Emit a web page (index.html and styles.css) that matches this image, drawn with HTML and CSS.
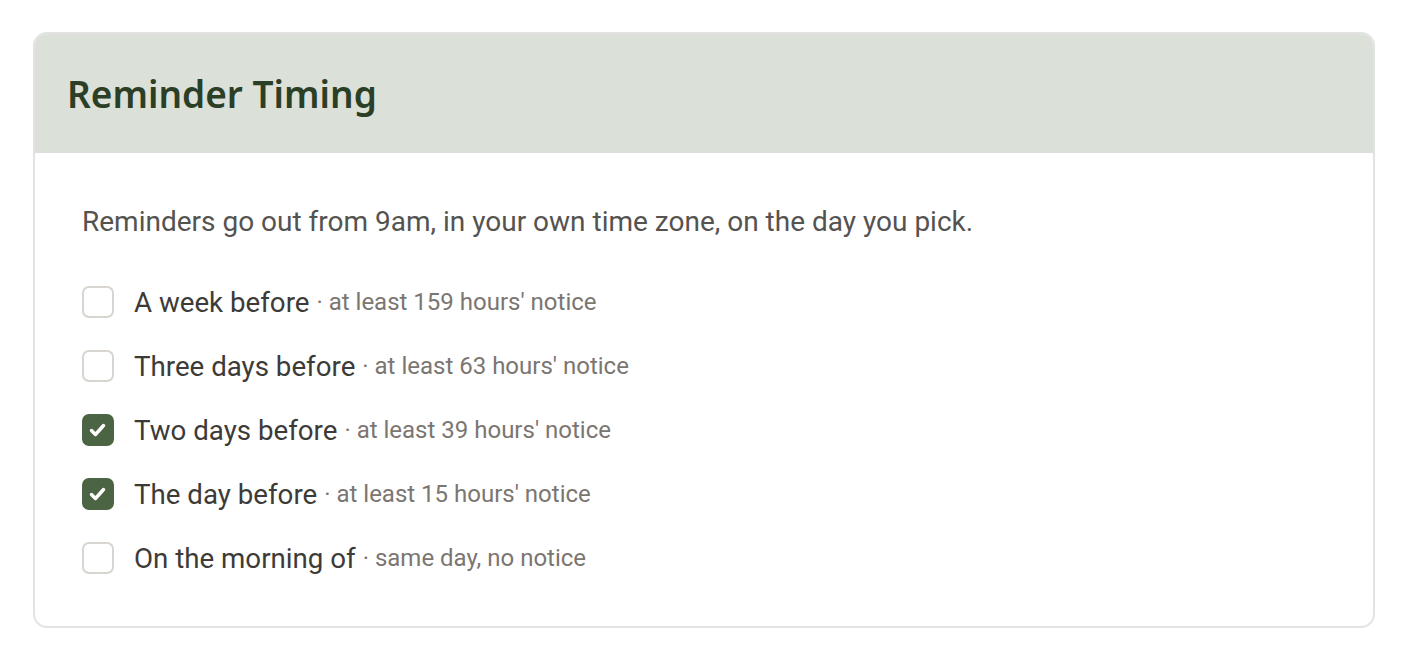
FILE: index.html
```html
<!DOCTYPE html>
<html lang="en">
<head>
    <meta charset="UTF-8">
    <meta name="viewport" content="width=device-width, initial-scale=1.0">
    <title>Reminder Timing</title>
    <link rel="stylesheet" href="styles.css">
</head>
<body>
    <div class="card">
        <div class="card-header">
            <h2>Reminder Timing</h2>
        </div>
        <div class="card-body">
            <p class="intro">Reminders go out from 9am, in your own time zone, on the day you pick.</p>
            <ul class="options">
                <li class="option">
                    <span class="box"></span>
                    <span class="label">A week before</span>
                    <span class="hint">· at least 159 hours' notice</span>
                </li>
                <li class="option">
                    <span class="box"></span>
                    <span class="label">Three days before</span>
                    <span class="hint">· at least 63 hours' notice</span>
                </li>
                <li class="option">
                    <span class="box checked">
                        <svg viewBox="2 2 28 28" width="28" height="28"><path d="M9.5 16.5l4 4 8-9" fill="none" stroke="#fff" stroke-width="3.4" stroke-linecap="round" stroke-linejoin="round"/></svg>
                    </span>
                    <span class="label">Two days before</span>
                    <span class="hint">· at least 39 hours' notice</span>
                </li>
                <li class="option">
                    <span class="box checked">
                        <svg viewBox="2 2 28 28" width="28" height="28"><path d="M9.5 16.5l4 4 8-9" fill="none" stroke="#fff" stroke-width="3.4" stroke-linecap="round" stroke-linejoin="round"/></svg>
                    </span>
                    <span class="label">The day before</span>
                    <span class="hint">· at least 15 hours' notice</span>
                </li>
                <li class="option">
                    <span class="box"></span>
                    <span class="label">On the morning of</span>
                    <span class="hint">· same day, no notice</span>
                </li>
            </ul>
        </div>
    </div>
</body>
</html>
```

FILE: styles.css
```css
body {
    margin: 0;
    padding: 32px 33px;
    background: #fff;
    font-family: Roboto, "Liberation Sans", sans-serif;
}
.card {
    border: 2px solid #e3e3e3;
    border-radius: 14px;
    overflow: hidden;
    background: #fff;
}
.card-header {
    background-color: #dbe0d9;
    height: 119px;
    display: flex;
    align-items: center;
    padding: 0 32px;
}
.card-header h2 {
    margin: 0;
    font-family: "Noto Sans", Lato, sans-serif;
    font-weight: 600;
    font-size: 37px;
    color: #2b3f26;
}
.card-body {
    padding: 51px 47px 52px;
}
.intro {
    margin: 0 0 46px;
    font-size: 28px;
    line-height: 36px;
    color: #555350;
}
.options {
    list-style: none;
    margin: 0;
    padding: 0;
    display: flex;
    flex-direction: column;
    gap: 32px;
}
.option {
    display: flex;
    align-items: center;
    height: 32px;
}
.box {
    width: 28px;
    height: 28px;
    border: 2px solid #d8d4cf;
    border-radius: 7px;
    margin-right: 20px;
    display: flex;
    align-items: center;
    justify-content: center;
    flex-shrink: 0;
}
.box.checked {
    background-color: #4b6443;
    border-color: #4b6443;
}
.label {
    font-size: 27.7px;
    color: #3d3b38;
    margin-right: 7px;
}
.hint {
    font-size: 24px;
    color: #7b7671;
}
```
